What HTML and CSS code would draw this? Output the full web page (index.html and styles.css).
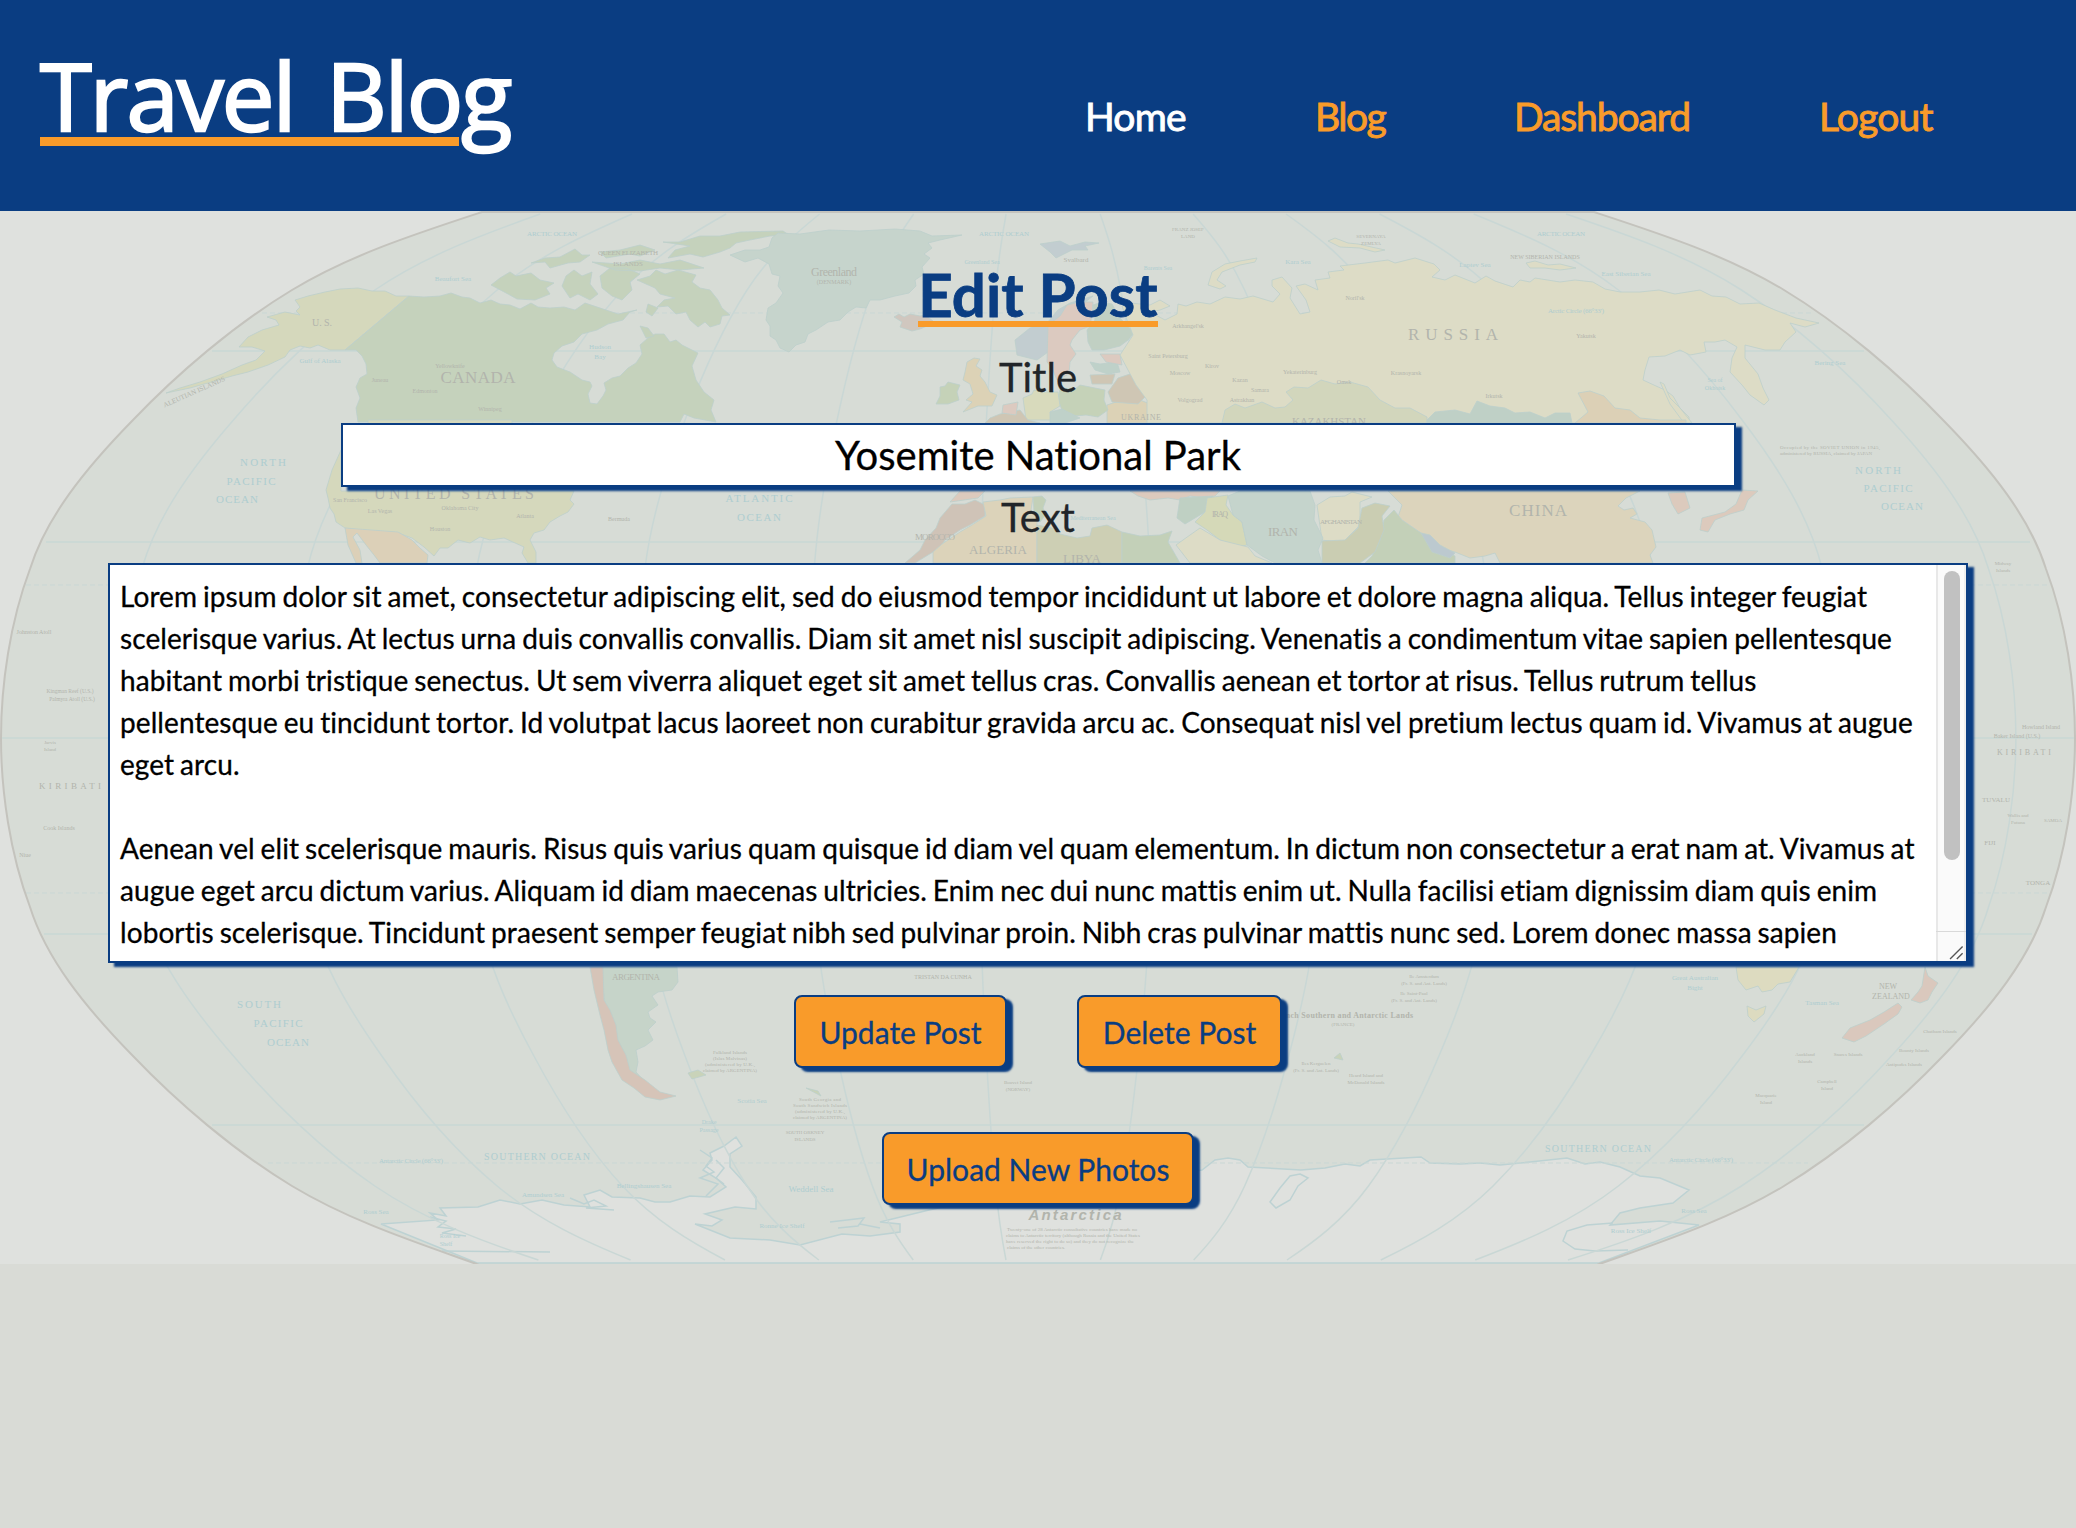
FILE: index.html
```html
<!DOCTYPE html>
<html lang="en">
<head>
<meta charset="utf-8">
<title>Travel Blog</title>
<link rel="stylesheet" href="styles.css">
</head>
<body>
<header class="header">
  <h1 class="logo"><span class="logo-line">Travel Blog</span></h1>
  <nav class="nav">
    <a class="nav-link active nav-home">Home</a>
    <a class="nav-link nav-blog">Blog</a>
    <a class="nav-link nav-dash">Dashboard</a>
    <a class="nav-link nav-out">Logout</a>
  </nav>
</header>
<main class="main">
  <svg class="map" viewBox="0 211 2076 1053" aria-hidden="true">
    <defs>
      <path id="globe" d="M482 212C415 234 350 255 292 290C234 325 177 374 133 420C84 470 46 518 30 569C10 622 1 685 1 738C1 791 10 854 30 907C46 958 84 1006 133 1056C177 1102 234 1151 292 1186C350 1221 415 1242 482 1266H1594C1661 1242 1726 1221 1784 1186C1842 1151 1899 1102 1943 1056C1992 1006 2030 958 2046 907C2066 854 2075 791 2075 738C2075 685 2066 622 2046 569C2030 518 1992 470 1943 420C1899 374 1842 325 1784 290C1726 255 1661 234 1594 212Z"/>
      <path id="mer" vector-effect="non-scaling-stroke" d="M-560 214C-623 234 -688 255 -746 290C-804 325 -861 374 -905 420C-954 470 -992 518 -1008 569C-1028 622 -1037 685 -1037 738C-1037 791 -1028 854 -1008 907C-992 958 -954 1006 -905 1056C-861 1102 -804 1151 -746 1186C-688 1221 -623 1242 -562 1260"/>
    </defs>
    <use href="#globe" class="ocean"/>
    <path class="ice" d="M381 1224L438 1220L430 1213L446 1216L440 1208L478 1207L500 1200L520 1204L542 1200L564 1205L590 1207L584 1195L600 1190L612 1197L640 1198L655 1202L670 1202L690 1196L710 1197L726 1187L716 1178L703 1170L712 1160L710 1153L724 1146L736 1137L742 1146L730 1154L730 1167L742 1180L756 1197L756 1209L735 1207L705 1214L722 1220L712 1226L695 1224L730 1238L770 1240L800 1245L842 1234L870 1236L900 1232L900 1224L880 1222L929 1210L1000 1195L1202 1170L1215 1160L1228 1158L1240 1160L1248 1167L1301 1170L1325 1168L1345 1164L1360 1166L1370 1160L1421 1157L1430 1163L1460 1164L1480 1163L1500 1165L1530 1162L1567 1158L1585 1164L1600 1162L1620 1167L1640 1176L1660 1178L1689 1190L1673 1203L1640 1208L1620 1213L1610 1225L1660 1221L1699 1225L1599 1263H477Z"/>
    <path class="coast" d="M1300 1174l8 4-10 8-8 14-14 8-6-6 10-14 10-12zM1613 1223l-26 2-20 6-4 10 12 8 20 2 33-1M700 1150l12 8-6 8 8 6-14 6 18 6-12 12M716 1160l8 8-8 10 8 6M430 1217l16 4-8 6 18 2-14 4 24 3M442 1251l108 1M570 1198l14 6 10-4 12 6-20 2 28 2M830 1222l34-4-6 8-20 2M860 1224l20 4"/>
    <g class="grid">
      <use href="#mer" transform="translate(1038) scale(.889 1)"/><use href="#mer" transform="translate(1038) scale(.725 1)"/><use href="#mer" transform="translate(1038) scale(.557 1)"/><use href="#mer" transform="translate(1038) scale(.39 1)"/><use href="#mer" transform="translate(1038) scale(.222 1)"/><use href="#mer" transform="translate(1038) scale(.057 1)"/><use href="#mer" transform="translate(1038) scale(-.111 1)"/><use href="#mer" transform="translate(1038) scale(-.277 1)"/><use href="#mer" transform="translate(1038) scale(-.443 1)"/><use href="#mer" transform="translate(1038) scale(-.61 1)"/><use href="#mer" transform="translate(1038) scale(-.778 1)"/><use href="#mer" transform="translate(1038) scale(-.943 1)"/>
      <path d="M212 351H1864M46 542H2030M1 738H2075M44 934H2032M212 1125H1864"/>
      <path stroke-dasharray="5 3" stroke-width="1" d="M262 313H1814M26 585H2050M26 893H2050M268 1163H1808"/>
    </g>
    <g class="land">
      <path fill="#d5d8bc" d="M409 296L396 296L385 291L372 291L358 288L340 289L325 292L308 296L295 300L300 307L296 311L300 315L285 312L267 317L276 320L279 325L262 330L248 337L239 347L252 347L265 351L256 360L242 365L222 374L200 382L180 388L166 393L190 388L215 381L232 376L248 372L268 365L285 357L290 350L300 346L310 348L318 345L330 350L345 350Z"/>
      <path fill="#c5d2bc" d="M409 296L345 350L356 350L362 356L366 364L367 374L360 378L356 387L360 398L356 408L358 422H680L684 414L694 418L716 422L711 410L714 400L704 392L696 380L692 366L698 353L682 345L676 340L670 342L664 334L655 334L648 338L640 345L642 354L636 363L628 368L620 376L612 378L604 383L606 390L603 396L597 404L590 403L588 394L592 386L590 382L582 380L570 372L557 367L552 360L554 353L562 346L574 342L582 334L597 330L608 324L623 320L630 312L637 310L618 314L600 308L585 303L575 310L564 307L550 308L538 307L531 303L520 309L510 305L500 304L491 300L480 303L470 298L462 297L451 293L440 296L424 297Z"/>
      <path fill="#c5d2bc" d="M637 280L650 276L656 270L665 274L678 270L696 275L692 282L700 288L710 290L718 300L722 308L730 315L722 316L720 324L710 327L705 322L698 327L690 320L686 312L676 314L668 306L657 307L664 300L675 298L660 294L655 288ZM491 285L500 278L510 272L516 276L531 273L540 280L554 283L546 288L550 294L535 300L517 299L508 294ZM663 242L680 242L700 236L720 236L740 232L783 231L789 235L770 236L750 240L736 243L730 248L720 252L703 257L690 254L668 258L675 250L690 246ZM531 263L545 258L560 257L575 249L582 255L590 255L580 262L568 263L550 268L545 262ZM600 252L620 250L640 245L655 250L640 256L630 254L606 258ZM566 276L574 270L582 276L592 272L590 284L598 294L590 300L578 294L570 298L562 286ZM600 276L610 268L626 268L640 274L630 282L632 290L622 300L612 296L602 288ZM592 262L620 264L640 260L660 264L680 260L704 268L680 270L660 268L640 271L615 270ZM640 326l8 2 6 8-8 2zM648 304l10 4-6 8-6-4z"/>
      <path fill="#c6d4cc" d="M730 255L745 250L760 250L769 247L772 238L778 233L800 234L829 230L860 231L895 229L920 231L932 236L962 235L940 240L928 243L932 248L924 254L930 258L922 267L924 274L915 280L916 286L909 293L895 296L880 300L870 300L866 308L856 307L848 312L840 320L828 322L816 330L808 334L805 342L796 345L789 352L780 348L776 340L770 336L770 326L766 320L768 308L776 303L783 293L778 286L780 276L772 274L769 264L758 258L745 262Z"/>
      <path fill="#d0c7bf" d="M894 317L899 314L904 317L910 314L920 316L925 315L933 321L927 326L920 329L912 331L900 327L902 322Z"/>
      <path fill="#d5d8bc" d="M326 490L332 470L341 450V491H574L570 500L574 504L568 512L560 516L550 522L544 530L534 533L530 540L536 552L536 563H528L522 553L524 547L504 538L490 540L480 537L470 543L458 540L448 548L440 548L434 556L424 547L412 538L398 533L358 530L345 528L336 522L334 514L330 508L328 498ZM368 420H512V424H368Z"/>
      <path fill="#dcd0b8" d="M345 528L398 532L412 540L420 548L428 555L427 563H380L374 555L366 545L357 533L353 537L360 550L362 563H356L348 545Z"/>
      <path fill="#c2cdd0" d="M1040 244L1060 241L1070 246L1085 242L1099 243L1085 246L1088 250L1072 250L1056 258L1050 252ZM1015 340L1030 328L1047 323L1058 310L1070 303L1093 296L1080 306L1066 312L1060 322L1050 332L1048 352L1037 360L1017 355Z"/>
      <path fill="#dccac0" d="M1048 325L1060 316L1067 305L1080 302L1093 302L1092 314L1090 326L1080 330L1072 340L1070 345L1076 354L1070 362L1069 374L1057 380L1052 368L1047 362Z"/>
      <path fill="#c1d0c3" d="M1087 330L1095 320L1093 305L1102 302L1112 304L1120 318L1134 333L1128 340L1120 346L1104 350L1092 350L1088 342Z"/>
      <path fill="#dcd2b6" d="M967 362L974 358L980 359L976 366L982 370L980 376L985 382L990 392L997 395L992 406L978 406L963 412L972 402L966 400L973 394L970 384L963 380L965 372ZM1107 405L1122 400L1140 400L1150 404L1164 402L1176 410L1188 415L1188 423H1107Z"/>
      <path fill="#c5d2b8" d="M940 387L945 386L948 382L960 385L957 392L959 400L948 404L936 404L940 396ZM1060 388L1075 389L1080 385L1105 390L1104 400L1108 410L1098 417L1086 415L1075 416L1062 410L1058 400Z"/>
      <path fill="#d8dabc" d="M1023 398L1032 394L1034 390L1044 392L1058 392L1060 406L1050 412L1054 420H1026Z"/>
      <path fill="#bfd1c9" d="M1050 412L1062 409L1072 414L1080 418L1065 423H1050ZM1090 362L1100 364L1117 362L1120 372L1108 374L1095 370Z"/>
      <path fill="#cfc6b4" d="M1118 378L1130 374L1138 382L1147 395L1138 404L1112 402L1108 392ZM1090 375L1115 374L1112 384L1092 384ZM990 418L1000 414L1020 410L1028 420L1040 423H985Z"/>
      <path fill="#dccac0" d="M1003 405L1018 402L1016 415L1002 413ZM1100 354L1120 354L1122 365L1106 362Z"/>
      <path fill="#dddcc6" d="M1120 355L1133 335L1125 315L1122 306L1130 303L1150 305L1160 300L1170 306L1160 310L1150 312L1165 320L1177 314L1178 304L1186 306L1197 302L1210 304L1225 297L1240 299L1253 296L1273 302L1280 294L1272 286L1272 280L1282 277L1292 288L1290 298L1300 314L1310 312L1306 300L1296 286L1305 284L1318 290L1315 280L1330 278L1328 272L1344 270L1340 266L1365 263L1388 260L1395 263L1415 258L1434 264L1440 270L1432 277L1445 280L1455 275L1465 279L1475 283L1486 276L1495 281L1513 287L1520 280L1530 282L1535 278L1560 282L1575 280L1593 282L1605 289L1620 292L1640 292L1659 290L1675 294L1700 290L1712 296L1726 297L1740 304L1759 303L1775 310L1796 318L1819 323L1805 327L1790 323L1796 332L1785 342L1780 350L1765 350L1745 345L1745 358L1758 374L1763 388L1769 400L1764 405L1750 395L1742 385L1730 372L1732 358L1737 347L1725 340L1715 342L1704 342L1706 352L1690 355L1680 350L1665 356L1649 357L1645 370L1643 380L1656 386L1665 390L1673 396L1680 408L1689 417V423H1147V400L1136 385Z"/>
      <path fill="#dddcc6" d="M1208 285L1212 272L1225 264L1240 261L1257 258L1255 262L1240 265L1222 272L1217 280L1226 286L1220 289ZM1328 241L1335 238L1348 243L1358 244L1385 250L1375 252L1360 248L1340 247ZM1526 263L1535 261L1548 265L1560 264L1576 268L1560 270L1545 268L1530 268ZM1660 382L1664 384L1670 398L1680 408L1692 423H1684L1670 404Z"/>
      <path fill="#d2d6bc" d="M1222 423L1225 410L1235 404L1245 408L1262 402L1275 408L1285 407L1293 400L1286 392L1294 387L1308 388L1321 380L1335 384L1350 382L1368 387L1380 400L1395 408L1410 408L1427 417V423Z"/>
      <path fill="#bfd0c6" d="M1427 420L1435 412L1455 410L1470 414L1477 401L1490 406L1505 408L1515 413L1530 412L1545 418L1555 413L1570 413L1572 423H1427Z"/>
      <path fill="#dcd0b6" d="M1578 393L1590 391L1604 396L1615 408L1630 410L1640 418L1660 420L1686 420V423H1575L1588 412Z"/>
      <path fill="#dcd4bc" d="M1388 491H1640L1626 498L1618 506L1624 510L1633 508L1637 514L1630 518L1645 522L1652 530L1656 547L1650 555L1653 563H1500L1495 553L1485 556L1470 558L1455 552L1440 548L1430 538L1421 533L1408 528L1398 517L1402 505Z"/>
      <path fill="#cfc3b7" d="M952 504L965 504L975 500L985 505L985 516L970 525L960 530L945 540L940 548L933 552L915 563H905L920 550L925 540L936 528L940 518Z"/>
      <path fill="#dcd3ba" d="M983 502L1000 500L1010 498L1033 497L1031 510L1037 520L1037 563H933V552L942 544L960 532L972 525L986 516Z"/>
      <path fill="#cdcfb4" d="M1037 525L1052 528L1060 534L1077 538L1090 536L1092 528L1107 525L1122 532V563H1037Z"/>
      <path fill="#c3d0b8" d="M1122 532L1140 536L1160 535L1172 531L1168 542L1180 563H1122ZM1033 497L1042 496L1046 500L1043 508L1046 514L1040 522L1034 512ZM1372 556L1380 540L1384 520L1394 510L1402 520L1421 533L1430 545L1455 556V563H1365Z"/>
      <path fill="#dccabd" d="M1130 491H1220L1215 496L1205 498L1190 496L1180 500L1168 498L1150 500L1138 496ZM960 491H985L978 498L950 502ZM1742 490L1758 491L1748 500L1744 510L1730 514L1715 520L1708 532L1700 530L1702 518L1725 512L1736 504ZM1668 493L1685 492L1690 508L1678 514L1672 504Z"/>
      <path fill="#bfd0c3" d="M1180 498L1213 496L1205 512L1185 524L1177 518Z"/>
      <path fill="#d5d9b8" d="M1207 498L1228 495L1226 505L1233 515L1242 522L1247 545L1238 547L1220 540L1207 530L1195 522L1205 512Z"/>
      <path fill="#dddcc6" d="M1190 535L1200 528L1220 540L1248 547L1255 556L1272 563H1190L1176 545ZM1317 505L1330 497L1345 496L1352 492L1372 497L1360 502L1360 525L1342 543L1322 540Z"/>
      <path fill="#c5d4cc" d="M1228 496L1240 491H1310L1315 505L1314 520L1323 538L1318 550L1322 563H1275L1262 556L1247 545L1242 522L1233 515Z"/>
      <path fill="#cacdb2" d="M1322 541L1345 540L1358 528L1362 508L1375 503L1390 506L1382 516L1384 530L1375 552L1360 563H1322Z"/>
      <path fill="#bcc9cf" d="M1421 533L1430 535L1440 545L1455 553L1450 558L1432 552Z"/>
      <path fill="#c6d4c9" d="M600 967H677L678 982L672 990L658 992L652 996L658 1005L648 1012L650 1018L656 1022L648 1030L653 1040L645 1046L636 1050L638 1062L636 1072L645 1082L640 1088L622 1060L614 1030L606 1010Z"/>
      <path fill="#d6c4b8" d="M590 967H603L604 1000L610 1010L616 1025L618 1040L626 1055L630 1070L645 1080L660 1092L676 1096L660 1100L645 1097L634 1088L622 1080L612 1062L608 1050L604 1030L600 1015L594 990Z"/>
      <path fill="#dddbc0" d="M1736 967H1799L1790 982L1778 984L1772 990L1762 992L1758 986L1746 990L1738 980ZM1747 1006L1756 1010L1766 1006L1764 1014L1754 1022L1748 1016Z"/>
      <path fill="#dac8bd" d="M1925 967L1928 976L1938 983L1932 992L1928 1000L1920 1003L1911 1000L1918 992L1922 986ZM1898 1003L1902 1007L1898 1014L1884 1024L1866 1036L1854 1042L1842 1038L1850 1028L1870 1020L1884 1012Z"/>
      <path fill="#c9d3b9" d="M688 1073l10-3 8 5-14 4zM806 1088l12 3 3 5zM1334 1058l6-5 3 7z"/>
    </g>
    <g class="lbl">
      <text x="478" y="383" font-size="17" textLength="75">CANADA</text>
      <text x="454" y="499" font-size="16" textLength="160">UNITED  STATES</text>
      <text x="1453" y="340" font-size="17" textLength="90">RUSSIA</text>
      <text x="1538" y="516" font-size="17" textLength="58">CHINA</text>
      <text x="998" y="554" font-size="13" textLength="58">ALGERIA</text>
      <text x="1082" y="563" font-size="13" textLength="38">LIBYA</text>
      <text x="935" y="540" font-size="9" textLength="40">MOROCCO</text>
      <text x="1283" y="536" font-size="13" textLength="30">IRAN</text>
      <text x="1220" y="517" font-size="8" textLength="16">IRAQ</text>
      <text x="1341" y="524" font-size="7" textLength="42">AFGHANISTAN</text>
      <text x="1329" y="425" font-size="11" textLength="74">KAZAKHSTAN</text>
      <text x="1141" y="420" font-size="8" textLength="40">UKRAINE</text>
      <text x="322" y="326" font-size="10" textLength="20">U. S.</text>
      <text x="834" y="276" font-size="12" textLength="46">Greenland</text>
      <text x="834" y="284" font-size="6">(DENMARK)</text>
      <text x="628" y="255" font-size="7" textLength="60">QUEEN ELIZABETH</text>
      <text x="628" y="266" font-size="7">ISLANDS</text>
      <text x="636" y="980" font-size="9" textLength="48">ARGENTINA</text>
      <text x="1888" y="989" font-size="8">NEW</text>
      <text x="1891" y="999" font-size="8">ZEALAND</text>
      <text x="70" y="789" font-size="9" textLength="62">KIRIBATI</text>
      <text x="2024" y="755" font-size="8" textLength="54">KIRIBATI</text>
      <text x="1996" y="802" font-size="7">TUVALU</text>
      <text x="2038" y="885" font-size="7">TONGA</text>
      <text x="1990" y="845" font-size="7">FIJI</text>
      <text x="2018" y="817" font-size="5">Wallis and</text>
      <text x="2018" y="824" font-size="5">Futuna</text>
      <text x="2053" y="822" font-size="5">SAMOA</text>
      <text x="2041" y="729" font-size="6">Howland Island</text>
      <text x="2017" y="738" font-size="6">Baker Island (U.S.)</text>
      <text x="34" y="634" font-size="6">Johnston Atoll</text>
      <text x="70" y="693" font-size="5.5">Kingman Reef (U.S.)</text>
      <text x="72" y="701" font-size="5.5">Palmyra Atoll (U.S.)</text>
      <text x="59" y="830" font-size="6">Cook Islands</text>
      <text x="50" y="744" font-size="5">Jarvis</text><text x="50" y="751" font-size="5">Island</text>
      <text x="25" y="857" font-size="6">Niue</text>
      <text x="2003" y="565" font-size="5">Midway</text><text x="2003" y="572" font-size="5">Islands</text>
      <text x="195" y="394" font-size="7" transform="rotate(-24 195 394)">ALEUTIAN ISLANDS</text>
      <text x="730" y="1054" font-size="5" textLength="34">Falkland Islands</text><text x="730" y="1060" font-size="5" textLength="34">(Islas Malvinas)</text><text x="730" y="1066" font-size="5" textLength="50">(administered by U.K.,</text><text x="730" y="1072" font-size="5" textLength="54">claimed by ARGENTINA)</text>
      <text x="820" y="1101" font-size="5" textLength="42">South Georgia and</text><text x="820" y="1107" font-size="5" textLength="54">South Sandwich Islands</text><text x="820" y="1113" font-size="5" textLength="50">(administered by U.K.,</text><text x="820" y="1119" font-size="5" textLength="54">claimed by ARGENTINA)</text>
      <text x="805" y="1134" font-size="5">SOUTH ORKNEY</text><text x="805" y="1141" font-size="5">ISLANDS</text>
      <text x="1018" y="1084" font-size="5">Bouvet Island</text><text x="1018" y="1091" font-size="5">(NORWAY)</text>
      <text x="1343" y="1018" font-size="8" font-weight="bold" textLength="140">French Southern and Antarctic Lands</text><text x="1343" y="1026" font-size="5">(FRANCE)</text>
      <text x="1316" y="1065" font-size="5">Iles Kerguelen</text><text x="1316" y="1072" font-size="5">(Fr. S. and Ant. Lands)</text>
      <text x="1366" y="1077" font-size="5">Heard Island and</text><text x="1366" y="1084" font-size="5">McDonald Islands</text>
      <text x="1424" y="978" font-size="5">Ile Amsterdam</text><text x="1424" y="985" font-size="5">(Fr. S. and Ant. Lands)</text><text x="1414" y="995" font-size="5">Ile Saint-Paul</text><text x="1414" y="1002" font-size="5">(Fr. S. and Ant. Lands)</text>
      <text x="1805" y="1056" font-size="5">Auckland</text><text x="1805" y="1063" font-size="5">Islands</text>
      <text x="1848" y="1056" font-size="5">Snares Islands</text><text x="1914" y="1052" font-size="5">Bounty Islands</text><text x="1904" y="1066" font-size="5">Antipodes Islands</text><text x="1940" y="1033" font-size="5">Chatham Islands</text>
      <text x="1827" y="1083" font-size="5">Campbell</text><text x="1827" y="1090" font-size="5">Island</text><text x="1766" y="1097" font-size="5">Macquarie</text><text x="1766" y="1104" font-size="5">Island</text>
      <text x="943" y="979" font-size="6">TRISTAN DA CUNHA</text>
      <text x="1830" y="449" font-size="5" textLength="100">Occupied by the SOVIET UNION in 1945,</text><text x="1826" y="455" font-size="5">administered by RUSSIA, claimed by JAPAN</text>
      <text x="1188" y="231" font-size="5">FRANZ JOSEF</text><text x="1188" y="238" font-size="5">LAND</text><text x="1371" y="238" font-size="5">SEVERNAYA</text><text x="1371" y="245" font-size="5">ZEMLYA</text><text x="1545" y="259" font-size="6">NEW SIBERIAN ISLANDS</text><text x="1076" y="262" font-size="7">Svalbard</text>
      <text x="1168" y="358" font-size="6">Saint Petersburg</text><text x="1188" y="328" font-size="6">Arkhangel'sk</text><text x="1180" y="375" font-size="6">Moscow</text><text x="1212" y="368" font-size="6">Kirov</text><text x="1240" y="382" font-size="6">Kazan</text><text x="1300" y="374" font-size="6">Yekaterinburg</text><text x="1344" y="384" font-size="6">Omsk</text><text x="1406" y="375" font-size="6">Krasnoyarsk</text><text x="1355" y="300" font-size="6">Noril'sk</text><text x="1586" y="338" font-size="6">Yakutsk</text><text x="1260" y="392" font-size="6">Samara</text><text x="1190" y="402" font-size="6">Volgograd</text><text x="1494" y="398" font-size="6">Irkutsk</text><text x="1242" y="402" font-size="6">Astrakhan</text>
      <text x="380" y="513" font-size="6">Las Vegas</text><text x="350" y="502" font-size="6">San Francisco</text><text x="460" y="510" font-size="6">Oklahoma City</text><text x="525" y="518" font-size="6">Atlanta</text><text x="440" y="531" font-size="6">Houston</text><text x="619" y="521" font-size="6">Bermuda</text><text x="450" y="368" font-size="6">Yellowknife</text><text x="425" y="393" font-size="6">Edmonton</text><text x="490" y="411" font-size="6">Winnipeg</text><text x="380" y="382" font-size="6">Juneau</text>
      <text x="1075" y="1220" class="ant" textLength="93">Antarctica</text>
      <text x="1072" y="1231" font-size="5" textLength="130">Twenty-one of 28 Antarctic consultative countries have made no</text><text x="1073" y="1237" font-size="5" textLength="134">claims to Antarctic territory (although Russia and the United States</text><text x="1070" y="1243" font-size="5" textLength="128">have reserved the right to do so) and they do not recognize the</text><text x="1036" y="1249" font-size="5">claims of the other countries.</text>
    </g>
    <g class="sea">
      <text x="263" y="466" font-size="11" textLength="46">NORTH</text><text x="251" y="485" font-size="11" textLength="49">PACIFIC</text><text x="237" y="503" font-size="11" textLength="42">OCEAN</text>
      <text x="1878" y="474" font-size="11" textLength="46">NORTH</text><text x="1888" y="492" font-size="11" textLength="49">PACIFIC</text><text x="1902" y="510" font-size="11" textLength="42">OCEAN</text>
      <text x="759" y="502" font-size="11" textLength="67">ATLANTIC</text><text x="759" y="521" font-size="11" textLength="44">OCEAN</text>
      <text x="259" y="1008" font-size="11" textLength="44">SOUTH</text><text x="278" y="1027" font-size="11" textLength="49">PACIFIC</text><text x="288" y="1046" font-size="11" textLength="42">OCEAN</text>
      <text x="537" y="1160" font-size="10" textLength="106">SOUTHERN OCEAN</text><text x="1598" y="1152" font-size="10" textLength="106">SOUTHERN OCEAN</text>
      <text x="552" y="236" font-size="7" textLength="50">ARCTIC OCEAN</text><text x="1004" y="236" font-size="7" textLength="50">ARCTIC OCEAN</text><text x="1561" y="236" font-size="7" textLength="48">ARCTIC OCEAN</text>
      <text x="411" y="1163" font-size="7" textLength="64">Antarctic Circle (66°33')</text><text x="1701" y="1162" font-size="7" textLength="64">Antarctic Circle (66°33')</text><text x="1576" y="313" font-size="7" textLength="56">Arctic Circle (66°33')</text>
      <text x="453" y="281" font-size="7">Beaufort Sea</text><text x="982" y="264" font-size="6">Greenland Sea</text><text x="1158" y="270" font-size="6">Barents Sea</text><text x="1298" y="264" font-size="7">Kara Sea</text><text x="1475" y="267" font-size="7">Laptev Sea</text><text x="1626" y="276" font-size="7">East Siberian Sea</text><text x="1830" y="365" font-size="7">Bering Sea</text><text x="320" y="363" font-size="7">Gulf of Alaska</text><text x="600" y="349" font-size="7">Hudson</text><text x="600" y="359" font-size="7">Bay</text><text x="1715" y="382" font-size="6">Sea of</text><text x="1715" y="390" font-size="6">Okhotsk</text>
      <text x="644" y="1188" font-size="7">Bellingshausen Sea</text><text x="543" y="1197" font-size="7">Amundsen Sea</text><text x="376" y="1214" font-size="7">Ross Sea</text><text x="811" y="1192" font-size="9">Weddell Sea</text><text x="782" y="1228" font-size="7">Ronne Ice Shelf</text><text x="752" y="1103" font-size="7">Scotia Sea</text><text x="709" y="1124" font-size="6">Drake</text><text x="709" y="1132" font-size="6">Passage</text><text x="1694" y="1213" font-size="7">Ross Sea</text><text x="1631" y="1233" font-size="7">Ross Ice Shelf</text><text x="1822" y="1005" font-size="7">Tasman Sea</text><text x="1695" y="980" font-size="7">Great Australian</text><text x="1695" y="990" font-size="7">Bight</text><text x="1093" y="520" font-size="6">Mediterranean Sea</text><text x="450" y="1238" font-size="6">Ross Ice</text><text x="446" y="1246" font-size="6">Shelf</text>
    </g>
    <use href="#globe" class="rim"/>
  </svg>
  <form class="form">
    <h2 class="heading">Edit Post</h2>
    <div class="label label-title">Title</div>
    <div class="field">Yosemite National Park</div>
    <div class="label label-text">Text</div>
    <div class="area">
      <div class="area-text">
        <div class="line">Lorem ipsum dolor sit amet, consectetur adipiscing elit, sed do eiusmod tempor incididunt ut labore et dolore magna aliqua. Tellus integer feugiat</div>
        <div class="line">scelerisque varius. At lectus urna duis convallis convallis. Diam sit amet nisl suscipit adipiscing. Venenatis a condimentum vitae sapien pellentesque</div>
        <div class="line">habitant morbi tristique senectus. Ut sem viverra aliquet eget sit amet tellus cras. Convallis aenean et tortor at risus. Tellus rutrum tellus</div>
        <div class="line">pellentesque eu tincidunt tortor. Id volutpat lacus laoreet non curabitur gravida arcu ac. Consequat nisl vel pretium lectus quam id. Vivamus at augue</div>
        <div class="line">eget arcu.</div>
        <div class="line">&nbsp;</div>
        <div class="line">Aenean vel elit scelerisque mauris. Risus quis varius quam quisque id diam vel quam elementum. In dictum non consectetur a erat nam at. Vivamus at</div>
        <div class="line">augue eget arcu dictum varius. Aliquam id diam maecenas ultricies. Enim nec dui nunc mattis enim ut. Nulla facilisi etiam dignissim diam quis enim</div>
        <div class="line">lobortis scelerisque. Tincidunt praesent semper feugiat nibh sed pulvinar proin. Nibh cras pulvinar mattis nunc sed. Lorem donec massa sapien</div>
      </div>
      <div class="scroll">
        <div class="track"><div class="thumb"></div></div>
        <svg class="grip" viewBox="0 0 30 30"><path d="M14 28L27 15M21 28L27 22"/></svg>
      </div>
    </div>
    <div class="row">
      <button type="button" class="btn btn-update">Update Post</button>
      <button type="button" class="btn btn-delete">Delete Post</button>
    </div>
    <button type="button" class="btn btn-upload">Upload New Photos</button>
  </form>
</main>
</body>
</html>
```
FILE: styles.css
```css
* { box-sizing: border-box; }
body { margin: 0; background: #d9dbd6; font-family: Lato, sans-serif; min-height: 1528px; font-variant-ligatures: none; }
.header { height: 211px; background: #0a3d82; display: flex; justify-content: space-between; padding: 0 144px 0 40px; }
.logo { margin: 42px 0 0; font: 400 94px/106px "Open Sans", sans-serif; letter-spacing: -1.9px; word-spacing: 9px; color: #fff; white-space: nowrap; -webkit-text-stroke: 2.4px #fff; }
.logo-line { display: block; width: 419px; height: 104px; border-bottom: 9px solid #f99b2a; }
.nav { display: flex; gap: 130px; padding-top: 92px; }
.nav-link { font: 400 39px/48px Lato, sans-serif; color: #f99b2a; white-space: nowrap; -webkit-text-stroke: .9px currentColor; }
.nav-link.active { color: #fff; }
.nav-home { width: 100px; letter-spacing: -.8px; }
.nav-blog { width: 69px; letter-spacing: -1.5px; }
.nav-dash { width: 175px; letter-spacing: -1.1px; }
.nav-out { width: 113px; letter-spacing: -.8px; }
.main { position: relative; height: 1053px; background: #dfe1de; overflow: hidden; }
.map { position: absolute; inset: 0; width: 2076px; height: 1053px; }
.ocean { fill: #d7dcd6; }
.rim { fill: none; stroke: #c4c3bd; stroke-width: 2; }
.ice { fill: #dfe1de; stroke: #bdd2d3; stroke-width: 1.5; }
.coast { fill: none; stroke: #bdd2d3; stroke-width: 1.5; }
.grid { fill: none; stroke: #c9d7d5; stroke-width: 1.5; }
.land { stroke: #bccfcb; stroke-width: .8; stroke-linejoin: round; }
.lbl, .sea { font-family: "Liberation Serif", serif; text-anchor: middle; fill: #b2b4ac; }
.sea { fill: #aecdd0; }
.ant { font: italic bold 15px "Liberation Sans", sans-serif; }
.form { position: relative; display: flex; flex-direction: column; align-items: center; padding-top: 47px; -webkit-text-stroke: .3px currentColor; }
.heading { margin: 0; height: 69px; font-size: 60px; line-height: 72px; font-weight: 700; color: #0a3d82; border-bottom: 6px solid #f99b2a; -webkit-text-stroke: .8px currentColor; letter-spacing: .1px; }
.label { font-size: 40px; line-height: 60px; color: #212529; }
.label-title { margin: 20px 0 16px; height: 60px; }
.field { width: 1395px; height: 64px; border: 2px solid #0a3d82; background: #fff; box-shadow: 6px 4px 2px #0a3d82; text-align: center; font-size: 40px; line-height: 60px; color: #000; }
.label-text { margin: 0 0 16px; height: 60px; }
.area { width: 1860px; height: 400px; border: 2px solid #0a3d82; background: #fff; box-shadow: 6px 4px 2px #0a3d82; display: flex; justify-content: space-between; overflow: hidden; }
.area-text { padding: 10px 0 0 10px; font-size: 28px; line-height: 42px; color: #000; width: 1826px; }
.line { white-space: pre; letter-spacing: .08px; word-spacing: -1.35px; }
.scroll { width: 30px; background: #fafafa; border-left: 2px solid #e8e8e8; border-right: 2px solid #eee; }
.track { height: 366px; padding: 6px 0 0 6px; }
.thumb { width: 16px; height: 289px; border-radius: 8px; background: #c1c1c1; }
.grip { display: block; width: 30px; height: 30px; margin-left: -2px; border-top: 1px solid #d9d9d9; fill: none; stroke: #555; stroke-width: 1.4; }
.row { display: flex; gap: 70px; margin: 32px 0 64px; }
.btn { height: 73px; padding: 0; border: 2px solid #0a3d82; border-radius: 8px; background: #f99b2a; color: #0a3d82; box-shadow: 6px 4px 2px #0a3d82; font: 400 30px/68px Lato, sans-serif; -webkit-text-stroke: .3px currentColor; }
.btn-update { width: 213px; }
.btn-delete { width: 205px; }
.btn-upload { width: 312px; }
```
